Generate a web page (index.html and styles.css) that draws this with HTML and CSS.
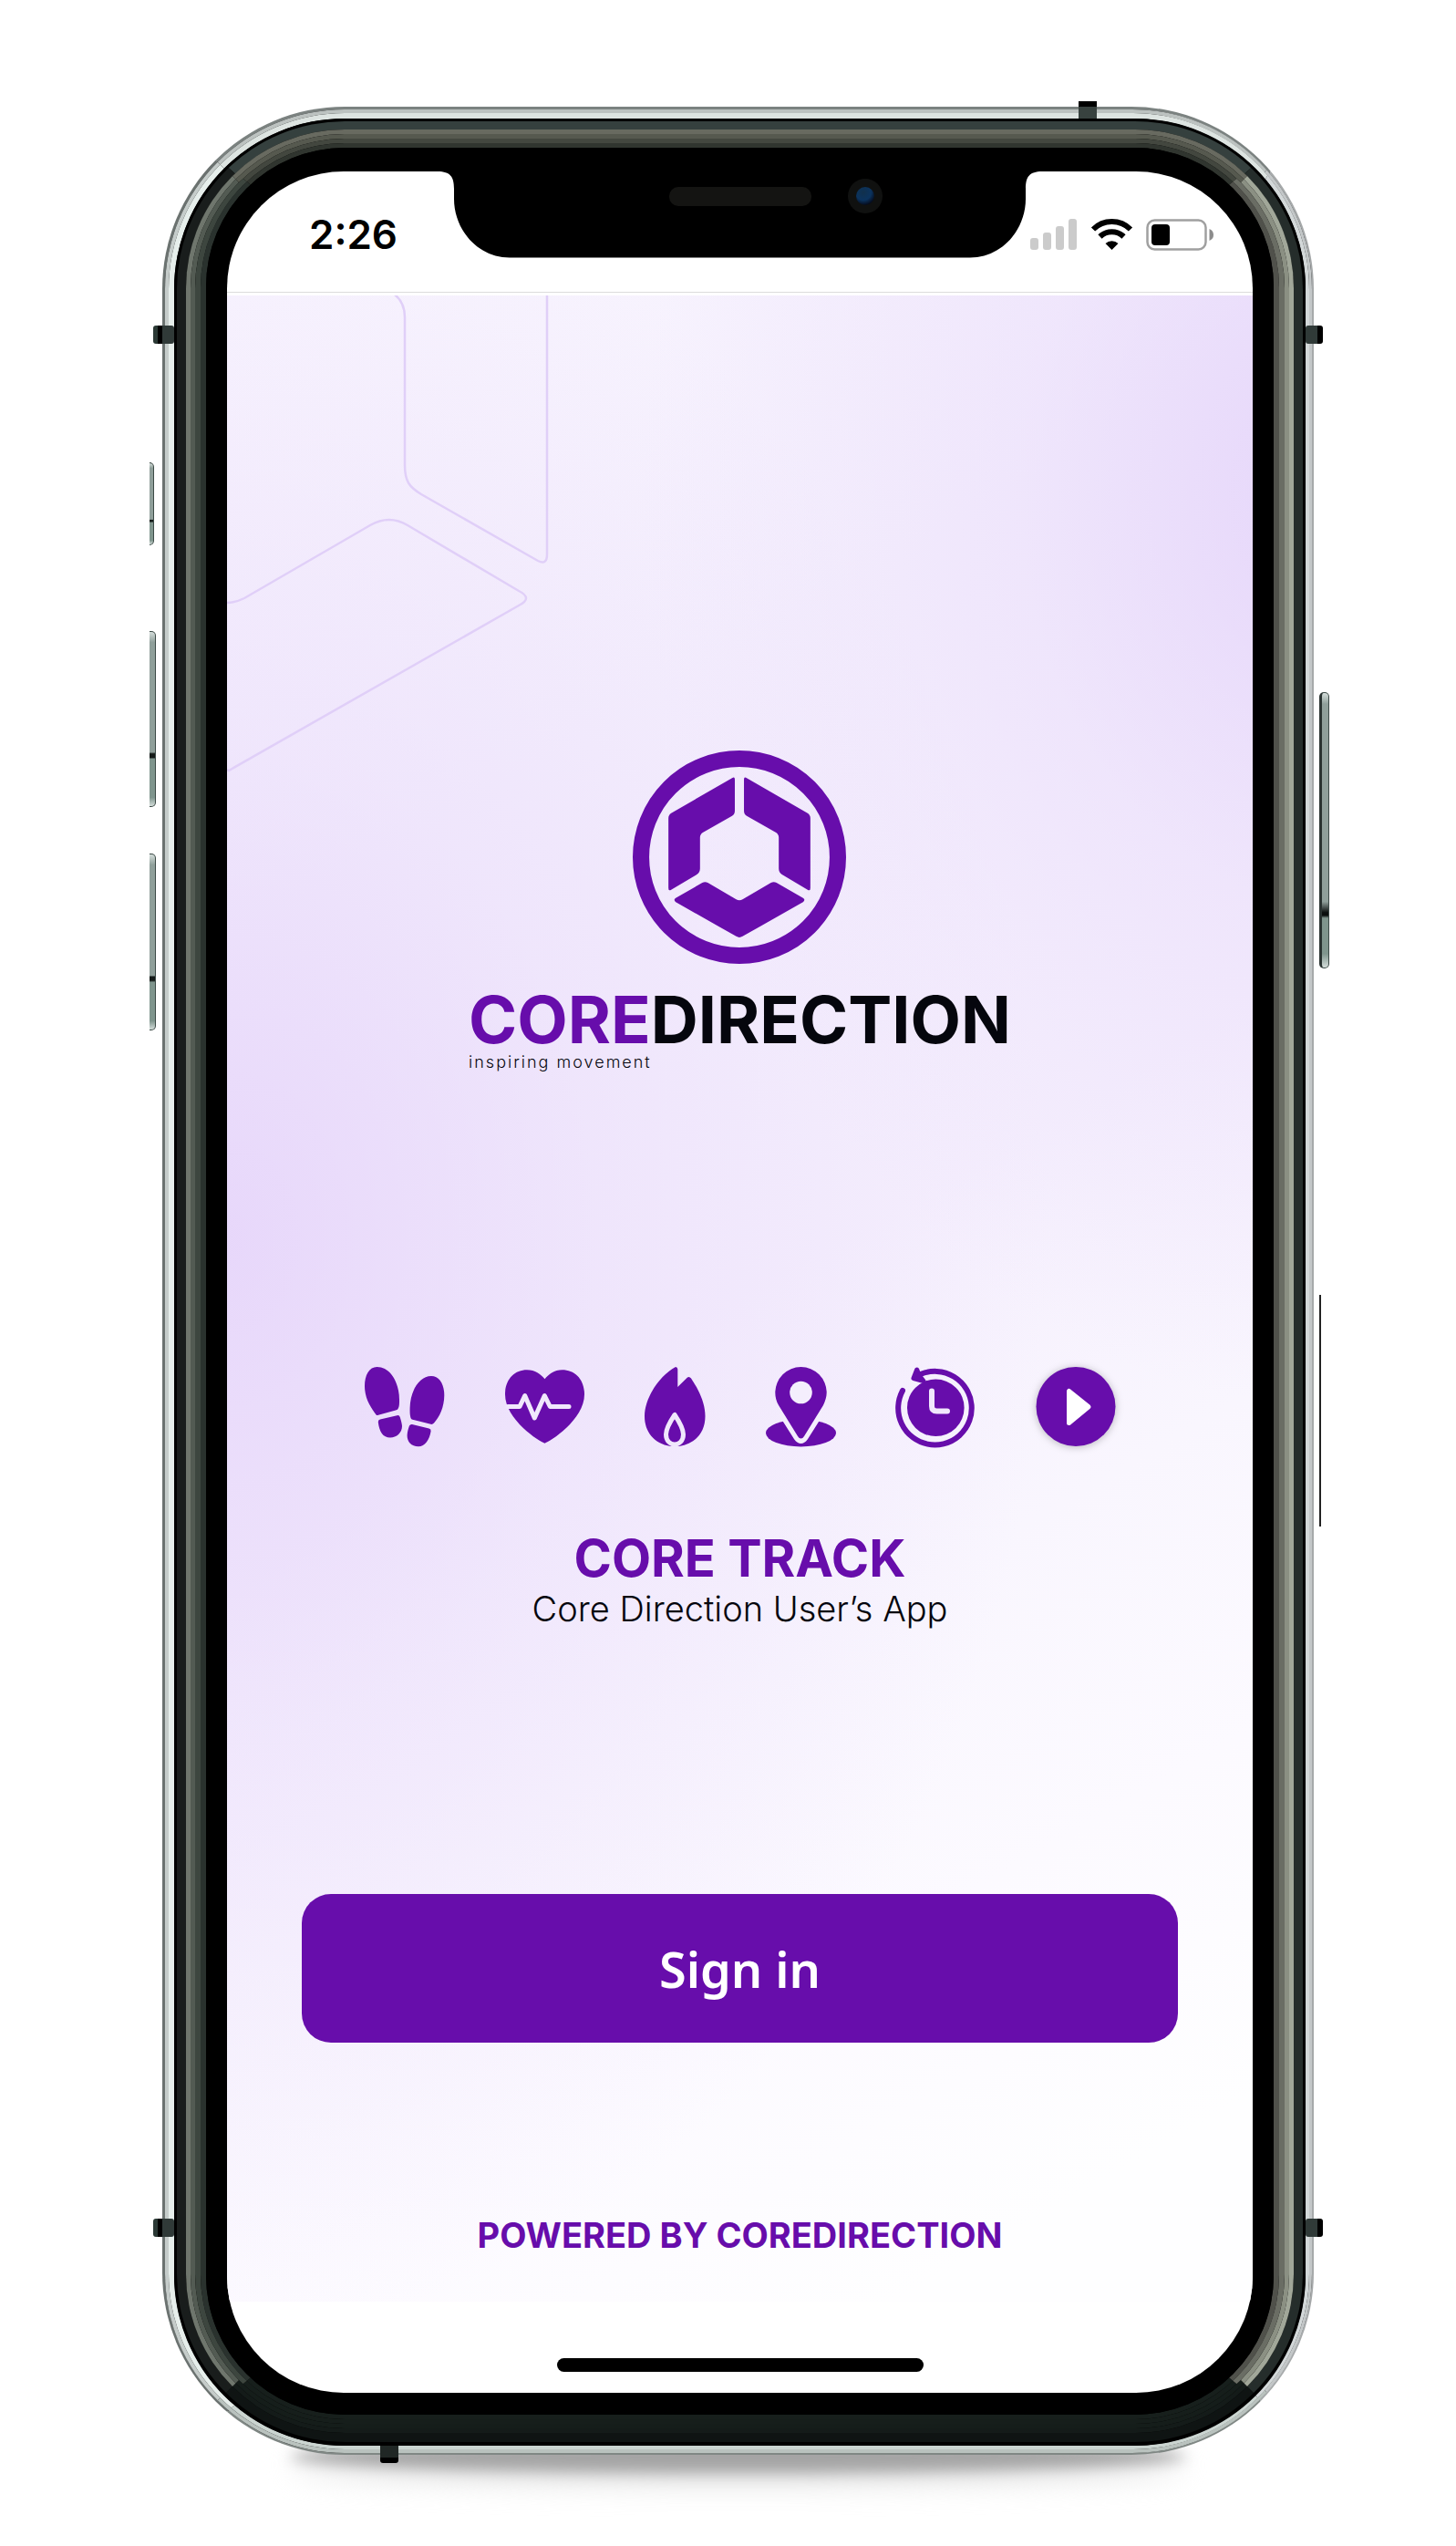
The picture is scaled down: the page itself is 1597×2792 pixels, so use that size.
FILE: index.html
```html
<!DOCTYPE html>
<html lang="en">
<head>
<meta charset="utf-8">
<meta name="viewport" content="width=device-width, initial-scale=1">
<title>Core Track – Sign in</title>
<link rel="stylesheet" href="styles.css">
</head>
<body>
<main class="stage">
  <div class="phone">
    <div class="ground-shadow"></div>
    <span class="key key-mute"></span>
    <span class="key key-up"></span>
    <span class="key key-down"></span>
    <span class="key key-power"></span>
    <span class="key-seam"></span>
    <div class="ring metal-edge"><div class="ring metal-mid"><div class="ring metal-light">
    <div class="ring gasket"><div class="ring lip">
    <div class="ring glow-1"><div class="ring glow-2"><div class="ring glow-3"><div class="ring glow-4">
    <div class="ring glass">
      <div class="screen">
        <header class="status">
          <span class="time">2:26</span>
          <svg class="status-icons" width="202" height="36" viewBox="0 0 202 36" role="img" aria-label="Signal, Wi-Fi, battery">
            <g fill="#cbcbcb"><rect x="0" y="22" width="9" height="13" rx="3"/><rect x="14" y="16" width="9" height="19" rx="3"/><rect x="28" y="9" width="9" height="26" rx="3"/><rect x="42" y="1" width="9" height="34" rx="3"/></g>
            <g fill="none" stroke="#000" stroke-width="6"><path d="M69 12.500A29 29 0 0 1 110 12.500"/><path d="M76.500 20.500A18.500 18.500 0 0 1 102.500 20.500"/></g>
            <path d="M82.500 28A10 10 0 0 1 96.500 28L89.500 35Z"/>
            <rect x="128.500" y="2.500" width="64" height="32" rx="8" fill="none" stroke="#a0a0a0" stroke-width="2.500"/>
            <rect x="133" y="7" width="20" height="23" rx="4"/>
            <path d="M196.500 12Q201 14 201 18.500T196.500 25Z" fill="#8c8c8c"/>
          </svg>
        </header>
        <div class="notch">
          <svg width="663" height="95" viewBox="0 0 663 95" aria-hidden="true">
            <defs><radialGradient id="lens" cx=".4" cy=".3" r=".7"><stop offset="0" stop-color="#11304c"/><stop offset=".6" stop-color="#0b335e"/><stop offset="1" stop-color="#050b1c"/></radialGradient></defs>
            <path d="M0 0H663C649 0 645 6 645 19V30C645 64 619 94.500 584 94.500H79C44 94.500 18 64 18 30V19C18 6 14 0 0 0Z"/>
            <rect x="254" y="17" width="156" height="21" rx="10" fill="#141412"/>
            <circle cx="469" cy="27" r="19" fill="#101110"/><circle cx="469" cy="27" r="10" fill="url(#lens)"/>
          </svg>
        </div>
        <section class="app">
          <svg class="hexes" width="360" height="530" viewBox="0 0 360 530" fill="none" stroke="#e0cff8" stroke-width="2.500" aria-hidden="true">
            <path d="M184 -1Q195 8 195 24V186C195 204 200 210 213 218L341 291Q351 296 351 284V-1"/>
            <path d="M0 337Q9 337 19 332L157 252Q178 240 198 252L320 324Q336 332 320 340L2 521L0 520"/>
          </svg>
          <div class="logo">
            <svg width="234" height="234" viewBox="0 0 233 233" fill="#670dab" aria-hidden="true">
              <circle cx="116.500" cy="116.500" r="107.500" fill="none" stroke="#670dab" stroke-width="18"/>
              <path d="M108.500 30Q111.500 28 111.500 31.500V66Q111.500 69.500 108.500 71.500L76.500 89.500Q73.500 91.500 73.500 95V129Q73.500 133 70 135.500L42 152Q39 154 39 150V74Q39 70.500 42 68.500Z"/>
              <path d="M124.500 30Q121.500 28 121.500 31.500V66Q121.500 69.500 124.500 71.500L156.500 89.500Q159.500 91.500 159.500 95V129Q159.500 133 163 135.500L191 152Q194 154 194 150V74Q194 70.500 191 68.500Z"/>
              <path d="M47 161L76 144.500Q79 143 82 144.500L113 162.500Q116.500 164.500 120 162.500L151 144.500Q154 143 157 144.500L186 161Q189 163 186 165.500L120 203Q116.500 205 113 203L47 165.500Q44 163 47 161Z"/>
            </svg>
            <h1 class="wordmark"><span class="core">CORE</span>DIRECTION</h1>
            <p class="tagline">inspiring movement</p>
          </div>
          <div class="features" aria-hidden="true">
            <svg width="88" height="88" viewBox="0 0 88 88">
              <path d="M13 53C7 45 0 35 0 21C0 9 5 0 13.500 0C28 0 38 17 38 36C38 40 38 43 37 45Q36.500 47 34 47.600L15 52.800Q13.500 53.200 13 53Z"/>
              <path d="M17 57.600L35.500 53.200Q38 52.700 38.700 55C40 59 41 63 41 65C41 72 35 77.500 28 77.500C20 77.500 16 71 14.800 60.500Q14.600 58.200 17 57.600Z"/>
              <path d="M50.500 56C49.500 53 49.500 49 49.600 45C50 26 60 10 73 10C82 10 87.300 19 87.300 31C87.300 44 82 55 76 61.500Q74.500 63.200 72.500 62.800L52.500 57.800Q51 57.400 50.500 56Z"/>
              <path d="M52 63L70.500 67.600Q73 68.300 72.600 70.500C71 80 66 87.300 59 87.300C51 87.300 46.500 82 46.600 75C46.800 71 48 67 49 64.500Q50 62.600 52 63Z"/>
            </svg>
            <svg width="87" height="88" viewBox="0 0 87 88">
              <path d="M43.500 83.700C38 82 0 58 0 30C0 14 10 3.300 24 3.300C33 3.300 39 8 43.500 13.300C48 8 54 3.300 62.500 3.300C77 3.300 87 14 87 30C87 58 49 82 43.500 83.700Z"/>
              <path class="cut" d="M3 43.500H16L21.700 31.500L32.300 56L43.300 31.500L49.300 43.500H70"/>
            </svg>
            <svg width="67" height="88" viewBox="0 0 67 88">
              <path d="M34 0Q36.200 0 36.300 2.500V22L47 11.500Q49 10 51 12.500C60 26 66.500 40 66.500 54C66.500 72 56 84 38 87H28.500C10 84 0 71 0 54C0 34 16 10 34 0Z"/>
              <path class="cut" d="M33 52.500C28 60 23.500 68 23.500 74C23.500 81 28 85 33 85C38 85 42.500 81 42.500 74C42.500 68 38 60 33 52.500Z"/>
            </svg>
            <svg width="77" height="88" viewBox="0 0 77 88">
              <ellipse cx="38.500" cy="72.500" rx="38.500" ry="15"/>
              <path class="halo" d="M18 50L35 77Q38.500 82 42 77L59 50"/>
              <path d="M38.500 78.500Q36.500 78.500 35 76L14 42C11.500 38 10.300 33 10.300 28.300A28.200 28.300 0 0 1 66.700 28.300C66.700 33 65 38 63 42L42 76Q40.500 78.500 38.500 78.500Z"/>
              <circle cx="38.500" cy="28" r="12.300" fill="#f4eefd"/>
            </svg>
            <svg width="87" height="88" viewBox="0 0 87 88">
              <path d="M7 26A40.300 40.300 0 1 0 27.300 7.800" fill="none" stroke="#670dab" stroke-width="6" stroke-linecap="round"/>
              <circle cx="43.300" cy="44.800" r="31.300"/>
              <path d="M22.700 3L19 12.500L30 15.500L25 9Z" stroke="#670dab" stroke-width="5" stroke-linejoin="round"/>
              <path class="cut hand" d="M39 26.500V43Q39 48.500 44.500 48.500H56"/>
            </svg>
            <svg class="play" width="88" height="88" viewBox="0 0 88 88">
              <circle cx="44" cy="43.500" r="43.500"/>
              <path d="M36.500 26.500V61.500L58 43.800Z" fill="#fff" stroke="#fff" stroke-width="5" stroke-linejoin="round"/>
            </svg>
          </div>
          <h2 class="title">CORE TRACK</h2>
          <p class="subtitle">Core Direction User’s App</p>
          <button class="signin" type="button">Sign in</button>
          <p class="powered">POWERED BY COREDIRECTION</p>
        </section>
        <footer class="home"><span class="home-bar"></span></footer>
      </div>
    </div>
    </div></div></div></div>
    </div></div>
    </div></div></div>
    <span class="band band-tl"></span>
    <span class="band band-tr"></span>
    <span class="band band-bl"></span>
    <span class="band band-br"></span>
    <span class="band-v band-top"></span>
    <span class="band-v band-bottom"></span>
  </div>
</main>
</body>
</html>
```

FILE: styles.css
```css
* { box-sizing: border-box; }

body {
  margin: 0;
  background: #fff;
  color: #05060d;
  font-family: Inter, "Liberation Sans", sans-serif;
}

h1, h2, p { margin: 0; }

.stage { padding: 117px 156px 100px 178px; }

.phone { position: relative; }

/* Device frame: concentric rings, outermost first */
.ring { border-style: solid; }

.metal-edge {
  position: relative;
  border-width: 3px 2px 2px 3px;
  border-color: #7b8280 #a6a9aa #7f8784 #6b7270;
  border-radius: 200px;
  background: #000;
}
.metal-mid {
  border-width: 4px 3px 4px 4px;
  border-color: #bcc2c0 #c3c7c8 #b9c2be #c5ccca;
  border-radius: 197px;
}
.metal-light {
  border-width: 6px 4px 4px 6px;
  border-color: #dde4e1 #d3d8d9 #cbd5d1 #e6eeeb;
  border-radius: 193px;
}
.gasket {
  border-width: 3px 3px 4px 3px;
  border-color: #000;
  border-radius: 187px;
}
.lip {
  border-width: 9px 10px 10px 10px;
  border-color: #35403e #252d2b #0f1413 #191d1c;
  border-radius: 184px;
}
.glow-1 {
  border-width: 5px;
  border-color: #686a60 #a1a799 #141b19 #6f766d;
  border-radius: 174px;
}
.glow-2 {
  border-width: 5px;
  border-color: #56594f #8b9083 #151d1a #535b53;
  border-radius: 169px;
}
.glow-3 {
  border-width: 5px 6px;
  border-color: #43473f #6a6d64 #161e1b #3d463f;
  border-radius: 164px;
}
.glow-4 {
  border-width: 5px 6px;
  border-color: #30352f #50514b #171f1c #2a322e;
  border-radius: 158px;
}
.glass {
  border-width: 26px 23px 24px 23px;
  border-color: #000;
  border-radius: 152px;
  background: #000;
}

.ground-shadow {
  position: absolute;
  right: 140px;
  bottom: -20px;
  left: 140px;
  height: 36px;
  border-radius: 50%;
  background: #a4a4a4;
  box-shadow: 0 10px 30px #ddd;
  filter: blur(8px);
}

/* Side keys */
.key {
  position: absolute;
  left: -14px;
  width: 7px;
  border: 1px solid #3c4a46;
  border-left: 0;
  border-radius: 0 5px 5px 0;
  background: linear-gradient(#d5dedb 0, #8f9f9a 6%, #8f9f9a 69%, #141a18 70%, #141a18 72%, #7f958d 73%, #7f958d 95%, #d5dedb);
}
.key-mute { top: 390px; width: 5px; height: 91px; }
.key-up { top: 575px; height: 193px; }
.key-down { top: 819px; height: 194px; }
.key-power {
  top: 642px;
  right: -17px;
  left: auto;
  width: 11px;
  height: 303px;
  border: 1px solid #3c4a46;
  border-left: 3px solid #2a3331;
  border-radius: 5px;
  background: linear-gradient(#d5dedb 0, #8f9f9a 4%, #8f9f9a 76%, #0b0f0e 80%, #0b0f0e 81%, #7f958d 82%, #7f958d 95%, #d5dedb);
}
.key-seam {
  position: absolute;
  top: 1303px;
  right: -8px;
  width: 2px;
  height: 254px;
  background: #222;
}

/* Antenna bands */
.band {
  position: absolute;
  width: 23px;
  height: 20px;
  border-radius: 3px;
  background: linear-gradient(90deg, #2b3935 5px, #000 5px, #000 10px, #303a38 10px);
}
.band-tl, .band-tr { top: 240px; }
.band-bl, .band-br { bottom: 239px; }
.band-tl, .band-bl { left: -10px; }
.band-tr, .band-br {
  right: -10px;
  width: 19px;
  background: linear-gradient(270deg, #000 6px, #303a38 6px);
}
.band-v {
  position: absolute;
  width: 20px;
  height: 19px;
}
.band-top {
  top: -6px;
  right: 238px;
  background: linear-gradient(#000 6px, #38423f 6px);
}
.band-bottom {
  bottom: -9px;
  left: 239px;
  border-radius: 0 0 3px 3px;
  background: linear-gradient(#202725 13px, #000 13px);
}

/* Screen */
.screen {
  position: relative;
  overflow: hidden;
  border-radius: 128px;
  background: #fff;
}

.status {
  display: flex;
  align-items: center;
  justify-content: space-between;
  height: 133px;
  padding: 6px 42px 0 90px;
  border-bottom: 1px solid #dcdcdc;
}
.time {
  color: #000;
  font-size: 44px;
  font-weight: 600;
  line-height: 48px;
}
.status-icons { display: block; }

.notch {
  position: absolute;
  top: 0;
  right: 0;
  left: 0;
  display: flex;
  justify-content: center;
}
.notch svg { display: block; }

.app {
  position: relative;
  display: flex;
  flex-direction: column;
  align-items: center;
  margin-top: 3px;
  padding: 499px 82px 51px;
  background:
    radial-gradient(ellipse 760px 1000px at 108% 10%, rgba(228, 211, 250, .9) 0%, rgba(230, 214, 250, .4) 45%, rgba(230, 214, 250, 0) 100%),
    radial-gradient(ellipse 900px 1200px at 0% 47%, rgba(229, 211, 250, .85) 0%, rgba(230, 214, 250, .4) 45%, rgba(230, 214, 250, 0) 100%),
    linear-gradient(150deg, #f8f4fe 0%, #f5f0fd 25%, #f5effd 50%, #f9f6fe 65%, #fcfaff 78%, #fefeff 92%);
}
.hexes {
  position: absolute;
  top: 0;
  left: 0;
}

.logo {
  display: flex;
  flex-direction: column;
  align-items: center;
}
.wordmark {
  margin-top: 25px;
  font-size: 72px;
  font-weight: 700;
  line-height: 72px;
}
.core { color: #670dab; }
.tagline {
  align-self: flex-start;
  font-size: 18px;
  font-weight: 300;
  line-height: 22px;
  letter-spacing: 2px;
}

.features {
  display: flex;
  justify-content: center;
  gap: 66px;
  margin-top: 323px;
}
.features svg {
  display: block;
  overflow: visible;
  fill: #670dab;
}
.features .cut {
  fill: none;
  stroke: #f0e7fc;
  stroke-width: 5;
  stroke-linecap: round;
  stroke-linejoin: round;
}
.features .hand { stroke-width: 6; }
.features .halo {
  fill: none;
  stroke: #f4eefd;
  stroke-width: 9;
}
.play { filter: drop-shadow(0 1px 4px rgba(0, 0, 0, .25)); }

.title {
  margin-top: 92px;
  color: #670dab;
  font-size: 56px;
  font-weight: 700;
  line-height: 60px;
}
.subtitle {
  font-size: 38px;
  font-weight: 300;
  line-height: 50px;
}
.signin {
  align-self: stretch;
  height: 163px;
  margin-top: 288px;
  padding: 0;
  border: 0;
  border-radius: 32px;
  background: #670dab;
  color: #fff;
  font-family: "Noto Sans", "Open Sans", sans-serif;
  font-size: 54px;
  font-weight: 600;
}
.powered {
  margin-top: 189px;
  color: #670dab;
  font-size: 38px;
  font-weight: 700;
  line-height: 44px;
}

.home {
  display: flex;
  justify-content: center;
  padding: 62px 0 23px;
}
.home-bar {
  width: 402px;
  height: 15px;
  border-radius: 8px;
  background: #000;
}
```
